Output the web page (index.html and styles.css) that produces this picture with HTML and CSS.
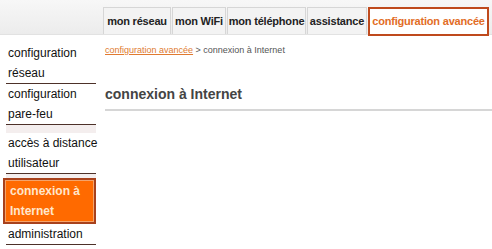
FILE: index.html
```html
<!DOCTYPE html>
<html lang="fr">
<head>
    <meta charset="UTF-8" />
    <title>configuration avancée</title>
    <link rel="stylesheet" href="styles.css">
</head>
<body>
    <!-- top navigation -->
    <div class="topbar">
        <ul class="tabs">
            <li class="tab t-net">mon réseau</li>
            <li class="tab t-wifi">mon WiFi</li>
            <li class="tab t-phone">mon téléphone</li>
            <li class="tab t-help">assistance</li>
            <li class="tab active">configuration avancée</li>
        </ul>
    </div>

    <div class="page">
        <!-- side menu -->
        <ul class="menu">
            <li class="item">configuration<br>réseau</li>
            <li class="item">configuration<br>pare-feu</li>
            <li class="spacer"></li>
            <li class="item">accès à distance<br>utilisateur</li>
            <li class="spacer small"></li>
            <li class="item current"><span>connexion à<br>Internet</span></li>
            <li class="item">administration</li>
        </ul>

        <div class="content">
            <p class="crumbs"><a href="#">configuration avancée</a> &gt; connexion à Internet</p>
            <h1>connexion à Internet</h1>
        </div>
    </div>
</body>
</html>
```

FILE: styles.css
```css
body {
    margin: 0;
    font-family: "Liberation Sans", Arial, sans-serif;
    color: #222;
    background: #fff;
}

.topbar {
    height: 34px;
    background: linear-gradient(#f7f7f7, #ececec);
    border-bottom: 1px solid #e2e2e2;
}

.tabs {
    list-style: none;
    margin: 0;
    padding: 7px 0 0 103px;
    display: flex;
}

.tab {
    height: 26px;
    line-height: 26px;
    margin-right: 1px;
    font-size: 11px;
    font-weight: bold;
    letter-spacing: -0.2px;
    text-align: center;
    background: #f3f3f3;
    border: 1px solid #d6d6d6;
    border-bottom: none;
    white-space: nowrap;
}

.t-net { width: 66px; }
.t-wifi { width: 52px; }
.t-phone { width: 77px; }
.t-help { width: 58px; }

.tab.active {
    width: 117px;
    height: 25px;
    line-height: 25px;
    background: #fff;
    color: #e26d26;
    border: 2px solid #bf4a1d;
}

.page {
    display: flex;
}

.menu {
    list-style: none;
    margin: 8px 0 0 6px;
    padding: 0;
    width: 90px;
}

.item {
    font-size: 12px;
    line-height: 20px;
    padding-left: 2px;
    color: #111;
    white-space: nowrap;
    border-bottom: 1px solid #4d3129;
}

.spacer {
    height: 8px;
    background: #f4eeee;
}

.spacer.small {
    height: 4px;
}

.item.current {
    margin-left: -3px;
    padding: 0;
    border: 2px solid #a8411c;
    background: #ff6a00;
}

.item.current span {
    display: block;
    border: 1px solid #f5a36a;
    padding: 0 0 0 4px;
    color: #ffe6cc;
    font-weight: bold;
}

.content {
    flex: 1;
    padding-left: 9px;
}

.crumbs {
    margin: 10px 0 0;
    font-size: 9px;
    color: #555;
}

.crumbs a {
    color: #e07a30;
}

h1 {
    margin: 30px 0 0;
    padding-bottom: 6px;
    font-size: 14px;
    line-height: 18px;
    color: #444;
    border-bottom: 2px solid #d6d6d6;
}
```
